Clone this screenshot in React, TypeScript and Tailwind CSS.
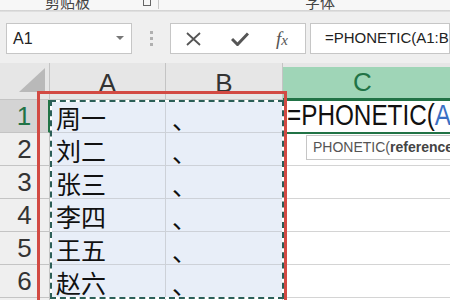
import React from "react";

const CJK = { fontFamily: '"Noto Sans CJK SC", "Liberation Sans", sans-serif' };
const LAT = { fontFamily: '"Liberation Sans", "Noto Sans CJK SC", sans-serif' };

const names = ["周一", "刘二", "张三", "李四", "王五", "赵六"];

export default function App() {
  return (
    <div className="relative w-[450px] h-[300px] overflow-hidden bg-white" style={LAT}>
      {/* ribbon bottom */}
      <div className="relative h-[10px] bg-[#f7f7f7] overflow-hidden">
        <div className="absolute left-[45px] -top-[9px] text-[15px] text-[#444]" style={CJK}>剪贴板</div>
        <div className="absolute left-[143px] -top-[3px] w-[8px] h-[9px] border border-[#666]"></div>
        <div className="absolute left-[158px] top-0 w-px h-[9px] bg-[#c8c8c8]"></div>
        <div className="absolute left-[305px] -top-[9px] text-[15px] text-[#444]" style={CJK}>字体</div>
      </div>
      <div className="h-[2px] bg-gradient-to-b from-[#cfcfcf] to-[#e4e4e4]"></div>

      {/* formula bar */}
      <div className="flex h-[51px] bg-[#efefef] pt-[11px]">
        <div className="ml-[6px] w-[126px] h-[31px] bg-white border border-[#c6c6c6] flex items-center pl-[6px] pr-[7px]">
          <span className="text-[16px] text-[#222] flex-1">A1</span>
          <svg width="8" height="5" viewBox="0 0 8 5"><path d="M0 0 H8 L4 4 Z" fill="#777" /></svg>
        </div>
        <div className="w-[38px] flex justify-center pt-[8px]">
          <div className="flex flex-col gap-[3px]">
            <div className="w-[3px] h-[3px] bg-[#b0b0b0]"></div>
            <div className="w-[3px] h-[3px] bg-[#b0b0b0]"></div>
            <div className="w-[3px] h-[3px] bg-[#b0b0b0]"></div>
          </div>
        </div>
        <div className="w-[136px] h-[31px] bg-white border border-[#c6c6c6] flex items-center">
          <svg className="ml-[15px]" width="15" height="14" viewBox="0 0 15 14">
            <path d="M1 1 L14 13 M14 1 L1 13" stroke="#555" strokeWidth="1.8" />
          </svg>
          <svg className="ml-[30px]" width="18" height="14" viewBox="0 0 18 14">
            <path d="M1 7 L6.5 12.5 L17 1.5" stroke="#555" strokeWidth="3" fill="none" />
          </svg>
          <span className="ml-[27px] text-[19px] italic text-[#555] leading-none" style={{ fontFamily: '"Liberation Serif", serif' }}>
            f<span className="text-[15px]">x</span>
          </span>
        </div>
        <div className="ml-[4px] flex-1 h-[31px] bg-white border border-[#c6c6c6] flex items-center pl-[14px] overflow-hidden whitespace-nowrap">
          <span className="text-[15px] text-[#222]">=PHONETIC(A1:B</span>
        </div>
      </div>

      {/* grid */}
      <div className="flex flex-col">
        {/* header */}
        <div className="grid grid-cols-[50px_116px_117px_1fr] h-[37px]">
          <div className="relative bg-[#e6e6e6] border-r border-b border-[#c4c4c4]">
            <svg className="absolute right-[4px] bottom-[7px]" width="26" height="24" viewBox="0 0 26 24">
              <path d="M26 0 V24 H0 Z" fill="#b9b9b9" />
            </svg>
          </div>
          <div className="bg-[#e6e6e6] border-r border-b border-[#c4c4c4] flex items-end justify-center text-[26px] text-[#333] leading-none pb-[3px]">A</div>
          <div className="bg-[#e6e6e6] border-r border-b border-[#c4c4c4] flex items-end justify-center text-[26px] text-[#333] leading-none pb-[3px]">B</div>
          <div className="bg-[#e6e6e6] flex flex-col">
            <div className="mt-[4px] flex-1 bg-[#9fd5b7] border-b-2 border-[#217346] flex items-end pl-[70px] text-[26px] text-[#217346] leading-none pb-[3px]">C</div>
          </div>
        </div>
        {names.map((n, i) => (
          <div key={n} className="grid grid-cols-[50px_116px_117px_1fr] h-[33px]">
            <div
              className={
                i === 0
                  ? "bg-[#d4d4d4] border-r-2 border-r-[#217346] border-b border-b-[#c4c4c4] flex items-end justify-center text-[26px] leading-none text-[#217346] pb-[3px]"
                  : "bg-[#efefef] border-r border-b border-[#c4c4c4] flex items-end justify-center text-[26px] leading-none text-[#333] pb-[3px]"
              }
            >
              {i + 1}
            </div>
            <div className="bg-[#e8eef8] border-r border-b border-[#cdd1d8] flex items-end pl-[6px] text-[25px] leading-none text-[#111] pb-[2px]" style={CJK}>
              {n}
            </div>
            <div className="bg-[#e8eef8] border-r border-b border-[#cdd1d8] flex items-end pl-[6px] text-[25px] leading-none text-[#111] pb-[1px]" style={CJK}>
              、
            </div>
            <div className="border-b border-[#d4d4d4] flex items-end overflow-hidden whitespace-nowrap">
              {i === 0 && (
                <span className="inline-block origin-left scale-x-[0.81] ml-[4px] pb-[2px] text-[30px] leading-none text-[#111]">
                  =PHONETIC(<span className="text-[#3a6fc4]">A</span>
                </span>
              )}
            </div>
          </div>
        ))}
        <div className="grid grid-cols-[50px_116px_117px_1fr] h-[10px]">
          <div className="bg-[#efefef] border-r border-[#c4c4c4]"></div>
          <div className="border-r border-[#d4d4d4]"></div>
          <div className="border-r border-[#d4d4d4]"></div>
          <div></div>
        </div>
      </div>

      {/* C1 active cell border */}
      <div className="absolute left-[283px] top-[99px] w-[180px] h-[35px] border-2 border-[#217346]"></div>

      {/* marching ants */}
      <div className="absolute left-[50px] top-[100px] w-[234px] h-[199px] border-2 border-white"></div>
      <div className="absolute left-[50px] top-[100px] w-[234px] h-[199px] border-2 border-dashed border-[#2c5f58]"></div>

      {/* red highlight rectangle */}
      <div className="absolute left-[37px] top-[91px] w-[250px] h-[230px] border-[3px] border-[#d24a43]"></div>

      {/* tooltip */}
      <div className="absolute left-[306px] top-[135px] w-[170px] h-[25px] bg-white border border-[#c6c6c6] flex items-center pl-[6px] whitespace-nowrap text-[14px] text-[#555]">
        PHONETIC(<span className="font-bold text-[#444]">reference</span>
      </div>
    </div>
  );
}
